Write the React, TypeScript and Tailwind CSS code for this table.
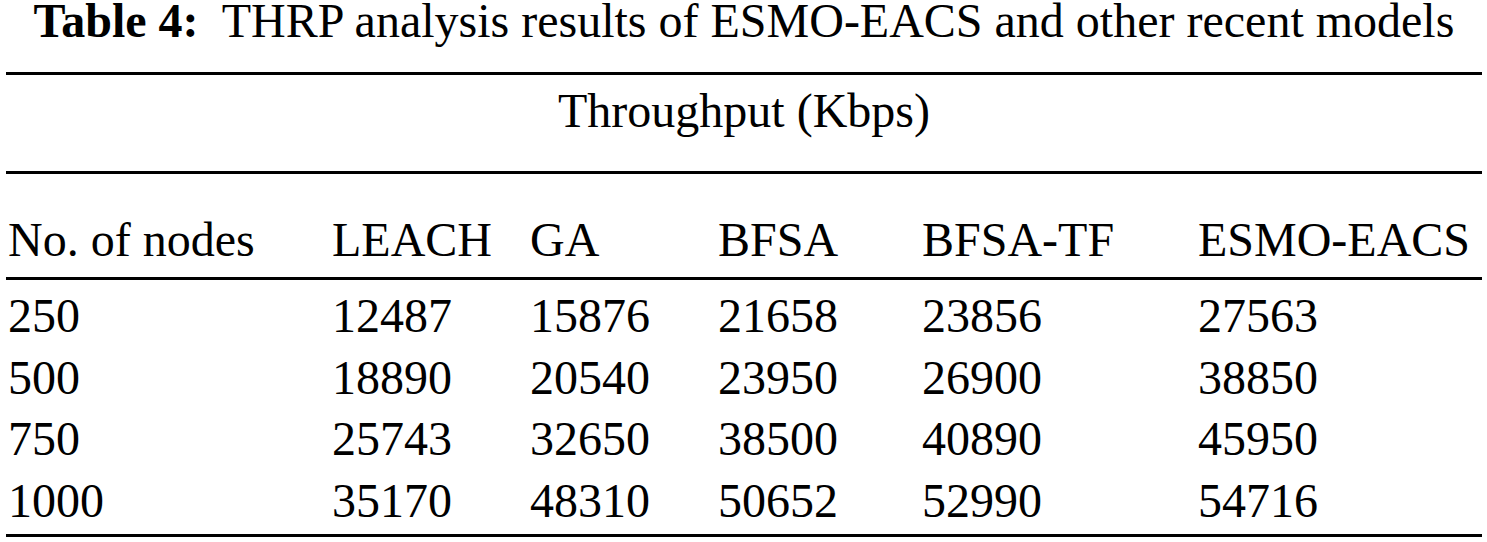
import React from "react";

const rows: string[][] = [
  ["250", "12487", "15876", "21658", "23856", "27563"],
  ["500", "18890", "20540", "23950", "26900", "38850"],
  ["750", "25743", "32650", "38500", "40890", "45950"],
  ["1000", "35170", "48310", "50652", "52990", "54716"],
];

const headers = ["No. of nodes", "LEACH", "GA", "BFSA", "BFSA-TF", "ESMO-EACS"];

export default function App() {
  return (
    <div
      className="w-[1487px] h-[542px] bg-white text-black overflow-hidden"
      style={{ fontFamily: '"Liberation Serif", "Times New Roman", serif' }}
    >
      <div className="ml-[6px] w-[1476px]">
        <div className="text-[48px] leading-[42px] text-center whitespace-pre">
          <span className="font-bold">Table 4:</span>
          {"  THRP analysis results of ESMO-EACS and other recent models"}
        </div>
        <div className="mt-[30px] border-t-[3px] border-black" />
        <div className="h-[96px] pt-[12px] text-[48px] leading-[48px] text-center">
          Throughput (Kbps)
        </div>
        <div className="border-t-[3px] border-black" />
        <div className="h-[103px] pt-[42px] pl-[2px] grid grid-cols-[324px_198px_188px_204px_276px_1fr] text-[48px] leading-[48px]">
          {headers.map((h) => (
            <div key={h} className="whitespace-nowrap">
              {h}
            </div>
          ))}
        </div>
        <div className="border-t-[3px] border-black" />
        <div className="pt-[5px] pb-[2px] pl-[2px]">
          {rows.map((r) => (
            <div
              key={r[0]}
              className="grid grid-cols-[324px_198px_188px_204px_276px_1fr] text-[48px] leading-[61.7px]"
            >
              {r.map((c, i) => (
                <div key={i}>{c}</div>
              ))}
            </div>
          ))}
        </div>
        <div className="border-t-[3px] border-black" />
      </div>
    </div>
  );
}
